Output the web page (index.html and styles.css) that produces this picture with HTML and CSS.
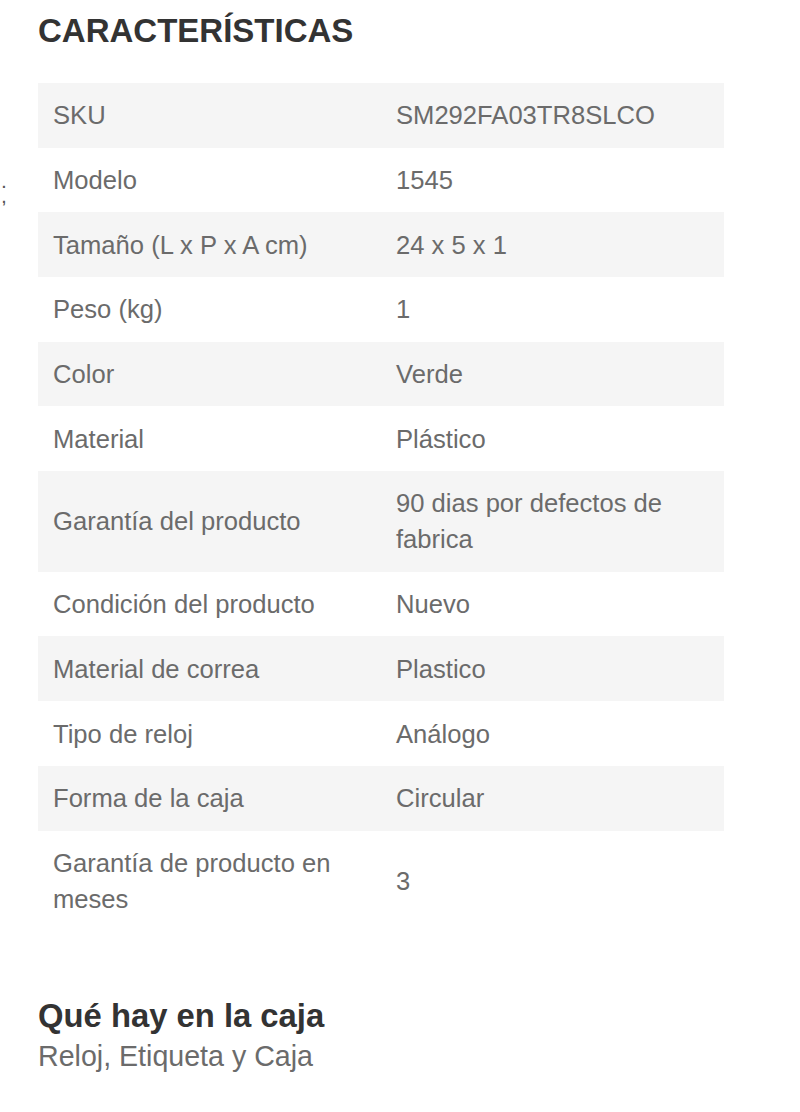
FILE: index.html
```html
<!DOCTYPE html>
<html lang="es">
<head>
<meta charset="utf-8">
<title>Características</title>
<link rel="stylesheet" href="styles.css">
</head>
<body>
<div class="page">
  <aside class="side">
    <div class="side-line">.</div>
    <div class="side-line">,</div>
  </aside>
  <main class="main">
    <h2 class="title">CARACTERÍSTICAS</h2>
    <table class="specs">
      <tbody>
        <tr><td>SKU</td><td>SM292FA03TR8SLCO</td></tr>
        <tr><td>Modelo</td><td>1545</td></tr>
        <tr><td>Tamaño (L x P x A cm)</td><td>24 x 5 x 1</td></tr>
        <tr><td>Peso (kg)</td><td>1</td></tr>
        <tr><td>Color</td><td>Verde</td></tr>
        <tr><td>Material</td><td>Plástico</td></tr>
        <tr><td>Garantía del producto</td><td>90 dias por defectos de fabrica</td></tr>
        <tr><td>Condición del producto</td><td>Nuevo</td></tr>
        <tr><td>Material de correa</td><td>Plastico</td></tr>
        <tr><td>Tipo de reloj</td><td>Análogo</td></tr>
        <tr><td>Forma de la caja</td><td>Circular</td></tr>
        <tr><td>Garantía de producto en meses</td><td>3</td></tr>
      </tbody>
    </table>
    <h3 class="box-title">Qué hay en la caja</h3>
    <p class="box-text">Reloj, Etiqueta y Caja</p>
  </main>
</div>
</body>
</html>
```

FILE: styles.css
```css
html, body {
  margin: 0;
  padding: 0;
  background: #ffffff;
}

body {
  font-family: "Liberation Sans", Arial, sans-serif;
  color: #6b6b6b;
}

.page {
  display: flex;
  width: 800px;
}

.side {
  width: 12px;
  padding-top: 176px;
  padding-left: 2px;
  color: #555555;
  font-size: 14px;
  font-weight: bold;
  line-height: 15px;
  flex-shrink: 0;
  box-sizing: border-box;
}

.side-line {
  height: 15px;
}

.main {
  padding-left: 26px;
  width: 686px;
}

.title {
  margin: 10.7px 0 32.3px 0;
  font-size: 33px;
  line-height: 40px;
  font-weight: bold;
  color: #333333;
}

.specs {
  width: 686px;
  border-collapse: collapse;
  font-size: 25.6px;
  line-height: 36px;
  color: #6b6b6b;
}

.specs td {
  width: 50%;
  padding: 14.35px 15px;
  vertical-align: middle;
}

.specs tr:nth-child(odd) {
  background: #f5f5f5;
}

.box-title {
  margin: 64.6px 0 0 0;
  font-size: 32.8px;
  line-height: 40px;
  font-weight: bold;
  color: #333333;
}

.box-text {
  margin: 0;
  font-size: 28.6px;
  line-height: 40px;
  color: #6b6b6b;
}
```
